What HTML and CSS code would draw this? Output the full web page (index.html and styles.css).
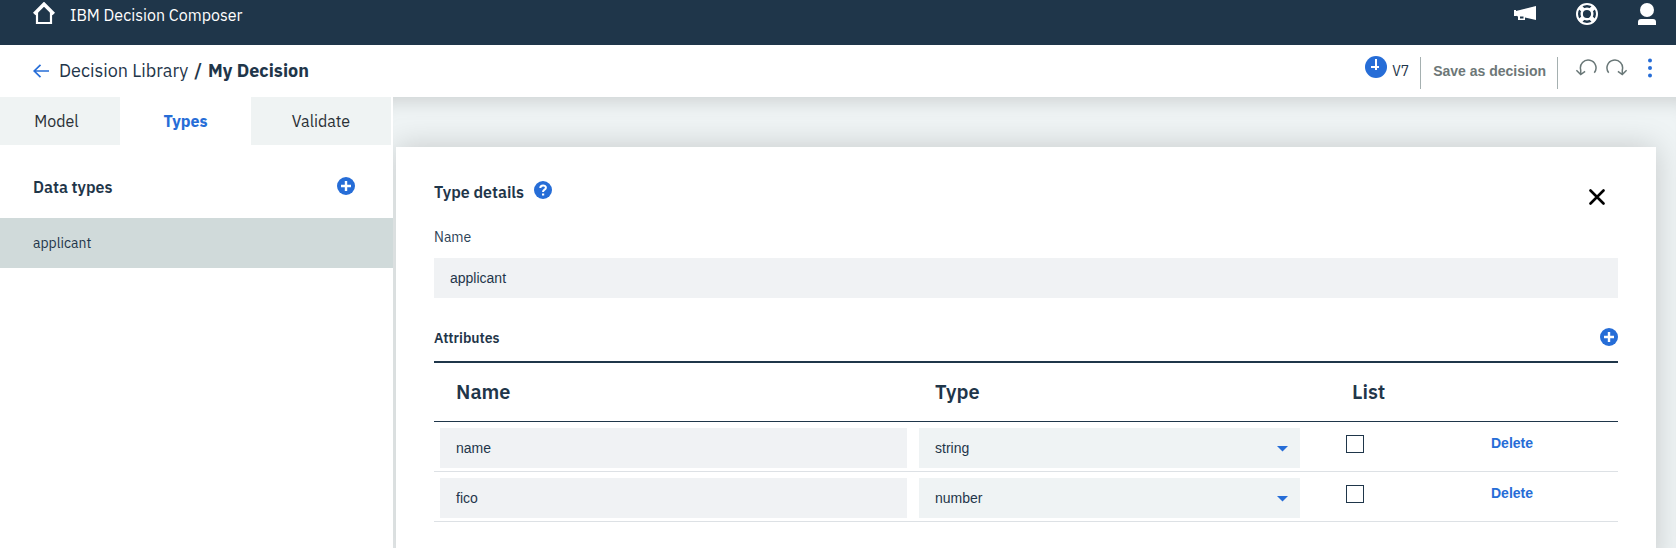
FILE: index.html
```html
<!DOCTYPE html>
<html lang="en">
<head>
<meta charset="utf-8">
<title>IBM Decision Composer</title>
<link rel="stylesheet" href="styles.css">
</head>
<body>
<header class="topbar">
  <svg class="home" width="22" height="22" viewBox="0 0 22 22"><path d="M1.200 12 11 2.200l9.800 9.800" fill="none" stroke="#fff" stroke-width="3.600"/><path d="M4 9.500V21h14V9.500" fill="none" stroke="#fff" stroke-width="2.200"/></svg>
  <span class="product">IBM Decision Composer</span>
  <div class="top-icons">
    <svg width="22" height="15" viewBox="0 0 22 15"><path d="M0 4h2v1L22 0v14l-11-2.500V14H4v-3.500L2 9.800V10H0z" fill="#fff"/><path d="M6 10.500h3.500v2H6z" fill="#1f364a"/></svg>
    <svg width="22" height="22" viewBox="0 0 22 22"><circle cx="11" cy="11" r="10" fill="none" stroke="#fff" stroke-width="2"/><circle cx="11" cy="11" r="5.300" fill="none" stroke="#fff" stroke-width="2.400"/><path d="m3.600 3.600 4 4m6.800 6.800 4 4m0-14.800-4 4m-6.800 6.800-4 4" stroke="#fff" stroke-width="4.500"/></svg>
    <svg width="18" height="22" viewBox="0 0 18 22"><circle cx="9" cy="7" r="7" fill="#fff"/><path d="M0 22v-3q0-3 3-3h12q3 0 3 3v3z" fill="#fff"/></svg>
  </div>
</header>
<nav class="subbar">
  <svg class="back" width="16" height="14" viewBox="0 0 16 14"><path d="M16 7H1.500M7.500.800 1.200 7l6.300 6.200" fill="none" stroke="#266dd7" stroke-width="1.700"/></svg>
  <span class="crumb">Decision Library</span><span class="slash">/</span><span class="current">My Decision</span>
  <div class="tools">
    <svg class="clock" width="22" height="22" viewBox="0 0 22 22"><circle cx="11" cy="11" r="11" fill="#266dd7"/><path d="M11 3v11M6 11h8" stroke="#fff" stroke-width="2"/></svg>
    <span class="version">V7</span>
    <i class="divider"></i>
    <button class="save">Save as decision</button>
    <i class="divider"></i>
    <svg class="undo" width="22" height="18" viewBox="0 0 22 18"><path d="M5.700 16.500V12A7.800 7.800 0 1 1 19.300 14.800M1.400 12.300l4.300 4.200 4.400-3.200" fill="none" stroke="#697777" stroke-width="1.500"/></svg>
    <svg class="redo" width="22" height="18" viewBox="0 0 22 18"><path d="M16.300 16.500V12A7.800 7.800 0 1 0 2.700 14.800M20.600 12.300l-4.300 4.200-4.400-3.200" fill="none" stroke="#697777" stroke-width="1.500"/></svg>
    <svg class="more" width="4" height="20" viewBox="0 0 4 20"><g fill="#266dd7"><circle cx="2" cy="2.500" r="2"/><circle cx="2" cy="10" r="2"/><circle cx="2" cy="17.500" r="2"/></g></svg>
  </div>
</nav>
<div class="workspace">
  <aside class="sidebar">
    <div class="tabs">
      <span class="tab tab-model">Model</span><span class="tab tab-types"><b>Types</b></span><span class="tab tab-validate">Validate</span>
    </div>
    <div class="types-head">
      <h2 class="h2 data-title">Data types</h2>
      <svg width="18" height="18" viewBox="0 0 18 18"><circle cx="9" cy="9" r="9" fill="#266dd7"/><path d="M9 4v10M4 9h10" stroke="#fff" stroke-width="2.400"/></svg>
    </div>
    <div class="type-row"><span>applicant</span></div>
  </aside>
  <main class="canvas">
    <section class="panel">
      <div class="panel-head">
        <h2 class="h2 details-title">Type details</h2>
        <svg class="help" width="18" height="18" viewBox="0 0 18 18"><circle cx="9" cy="9" r="9" fill="#266dd7"/><path d="M6.300 7C6.300 3.600 11.900 3.700 11.900 6.800 11.900 8.800 9 8.600 9 11" fill="none" stroke="#fff" stroke-width="2"/><path d="M8 12.500h2.200v2H8z" fill="#fff"/></svg>
        <svg class="close" width="16" height="16" viewBox="0 0 16 16"><path d="m1.500 1.500 13 13m0-13-13 13" stroke="#000" stroke-width="2.600" stroke-linecap="round"/></svg>
      </div>
      <label class="label">Name</label>
      <div class="field">applicant</div>
      <div class="attr-head">
        <h3 class="h3">Attributes</h3>
        <svg width="18" height="18" viewBox="0 0 18 18"><circle cx="9" cy="9" r="9" fill="#266dd7"/><path d="M9 4v10M4 9h10" stroke="#fff" stroke-width="2.400"/></svg>
      </div>
      <div class="row row-head"><span class="th">Name</span><span class="th th-type">Type</span><span class="th th-list">List</span></div>
      <div class="row">
        <div class="field">name</div>
        <div class="field select">string<svg width="11" height="6" viewBox="0 0 11 6"><path d="M0 0h11L5.500 5.500z" fill="#266dd7"/></svg></div>
        <span class="check"></span>
        <button class="delete">Delete</button>
      </div>
      <div class="row">
        <div class="field">fico</div>
        <div class="field select">number<svg width="11" height="6" viewBox="0 0 11 6"><path d="M0 0h11L5.500 5.500z" fill="#266dd7"/></svg></div>
        <span class="check"></span>
        <button class="delete">Delete</button>
      </div>
    </section>
  </main>
</div>
</body>
</html>
```

FILE: styles.css
```css
* { box-sizing: border-box; }
body { margin: 0; height: 548px; overflow: hidden; display: flex; flex-direction: column; font-family: "IBM Plex Sans", Roboto, sans-serif; color: #1f364a; background: #fff; }
svg { display: block; flex: none; }
h2, h3 { margin: 0; }
button { border: 0; padding: 0; background: none; font: bold 14px "Liberation Sans", sans-serif; white-space: nowrap; }

.topbar { height: 45px; flex: none; background: #1f364a; display: flex; align-items: flex-start; padding: 3px 20px 0 33px; color: #fff; }
.home { margin-top: -1px; }
.product { margin-left: 15px; font-size: 16px; line-height: 24px; }
.top-icons { margin-left: auto; display: flex; gap: 40px; }
.top-icons svg:first-child { margin-top: 3px; }

.subbar { height: 52px; flex: none; display: flex; align-items: flex-start; padding: 0 24px 0 33px; font-size: 18px; line-height: 52px; }
.back { margin: 19px 10px 0 0; }
.slash { margin: 0 6px; font-weight: 600; }
.current { font-weight: 700; }
.tools { margin-left: auto; display: flex; align-items: flex-start; }
.clock { margin-top: 11px; }
.version { margin: 0 11px 0 5px; font-size: 14px; }
.divider { width: 1px; height: 32px; margin-top: 12px; background: #a5b0b0; }
.save { color: #6d7777; margin: 18px 11px 0 12px; line-height: 16px; }
.undo { margin: 13px 9px 0 17px; }
.redo { margin: 13px 20px 0 0; }
.more { margin-top: 13px; }

.workspace { flex: 1; display: flex; min-height: 0; }
.sidebar { width: 393px; background: #fff; flex: none; }
.tabs { display: flex; height: 48px; padding-right: 2px; font-size: 16px; line-height: 48px; }
.tab { text-align: center; background: #eff3f3; color: #2a3036; }
.tab-model { width: 120px; padding-right: 7px; }
.tab-types { width: 131px; background: #fff; color: #266dd7; }
.tab-validate { width: 140px; }
.types-head { height: 73px; display: flex; align-items: flex-start; justify-content: space-between; padding: 32px 38px 0 33px; }
.h2 { font-size: 16px; line-height: 20px; font-weight: 600; }
.type-row { height: 50px; background: #d0dada; padding-left: 33px; font-size: 14px; line-height: 50px; }

.canvas { flex: 1; min-width: 0; overflow: hidden; background: #eff4f5; box-shadow: inset 0 22px 20px -18px rgba(0, 0, 0, .15); padding: 50px 20px 0 3px; }
.panel { height: 420px; background: #fff; box-shadow: 0 0 30px rgba(0, 0, 0, .18); padding: 34px 38px 0; }
.panel-head { height: 41px; display: flex; align-items: flex-start; }
.details-title { margin-top: 1px; }
.help { margin-left: 10px; }
.close { margin: 8px 13px 0 auto; }
.label { display: block; height: 36px; padding-top: 6px; font-size: 14px; line-height: 18px; color: #2c4256; }
.field { height: 40px; line-height: 41px; padding-left: 16px; background: #f0f2f4; font-family: "Liberation Sans", sans-serif; font-size: 14px; }
.attr-head { height: 65px; display: flex; justify-content: space-between; align-items: flex-start; padding-top: 30px; border-bottom: 2px solid #1f364a; }
.h3 { font-size: 14px; line-height: 20px; font-weight: 600; }
.row { height: 50px; display: grid; column-gap: 12px; grid-template-columns: 467px 381px 133px 150px; padding: 6px 0 0 6px; border-bottom: 1px solid #dde1e5; }
.row-head { height: 59px; padding-top: 0; border-color: #1f364a; }
.th { font-size: 20px; line-height: 58px; font-weight: 600; padding-left: 16px; }
.th-list { padding-left: 40px; }
.select { background: #eff3f4; display: flex; justify-content: space-between; padding-right: 12px; }
.select svg { margin-top: 18px; }
.check { width: 18px; height: 18px; border: 1px solid #1f364a; margin: 7px 0 0 34px; }
.delete { color: #266dd7; text-align: left; line-height: 16px; height: 16px; margin: 7px 0 0 34px; }
```
